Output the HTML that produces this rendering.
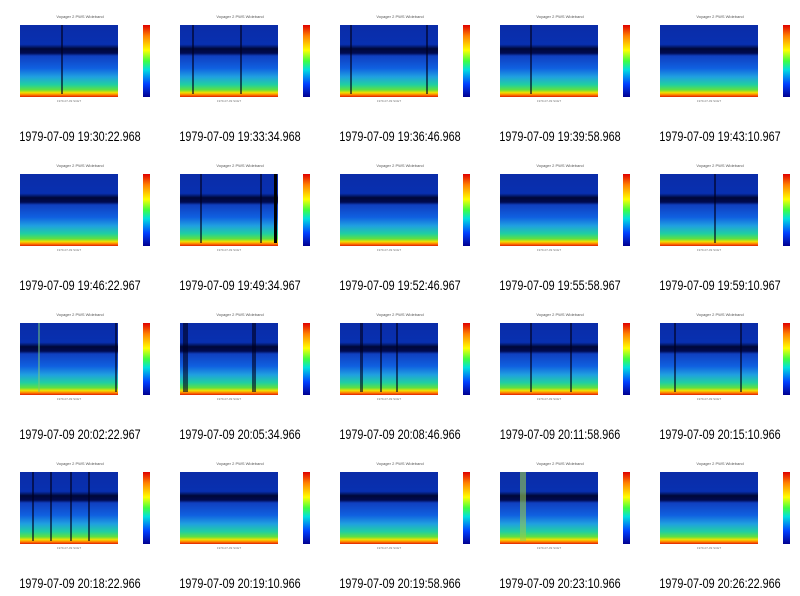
<!DOCTYPE html>
<html><head><meta charset="utf-8"><style>
*{margin:0;padding:0}
body{width:800px;height:596px;background:#fff;position:relative;overflow:hidden;font-family:"Liberation Sans",sans-serif}
.c{position:absolute;width:160px;height:149px}
.t{position:absolute;left:0;top:14px;width:160px;text-align:center;font-size:4px;color:#555}
.p{position:absolute;left:20px;top:25px;width:98px;height:72px;background:
linear-gradient(to top,#e02000 0,#ff8000 3%,#f0e000 6%,#60e040 10%,#20d0a0 17%,#20a0e0 28%,#1060e0 40%,#1040c0 57%,#000a50 61%,#000838 67%,#0830b0 73%,#0a2ca8 100%)}
.p i{position:absolute;top:0;bottom:3px;width:2px;background:rgba(0,0,30,.6)}
.cb{position:absolute;left:143px;top:25px;width:7px;height:72px;background:linear-gradient(#e00000,#ff8000 15%,#ffff00 35%,#40ff40 50%,#00e0e0 62%,#0040ff 82%,#000090)}
.ax{position:absolute;left:20px;top:99px;width:98px;font-size:3px;color:#777;text-align:center}
.cap{position:absolute;left:-20px;top:129px;width:200px;text-align:center;font-size:13.5px;color:#000;transform:scaleX(.8)}
</style></head><body>
<div class="c" style="left:0;top:0"><div class="t">Voyager 2 PWS Wideband</div><div class="p"><i style="left:41px"></i></div><div class="cb"></div><div class="ax">1979-07-09 SCET</div><div class="cap">1979-07-09 19:30:22.968</div></div>
<div class="c" style="left:160px;top:0"><div class="t">Voyager 2 PWS Wideband</div><div class="p"><i style="left:12px"></i><i style="left:60px"></i></div><div class="cb"></div><div class="ax">1979-07-09 SCET</div><div class="cap">1979-07-09 19:33:34.968</div></div>
<div class="c" style="left:320px;top:0"><div class="t">Voyager 2 PWS Wideband</div><div class="p"><i style="left:10px"></i><i style="left:86px"></i></div><div class="cb"></div><div class="ax">1979-07-09 SCET</div><div class="cap">1979-07-09 19:36:46.968</div></div>
<div class="c" style="left:480px;top:0"><div class="t">Voyager 2 PWS Wideband</div><div class="p"><i style="left:30px"></i></div><div class="cb"></div><div class="ax">1979-07-09 SCET</div><div class="cap">1979-07-09 19:39:58.968</div></div>
<div class="c" style="left:640px;top:0"><div class="t">Voyager 2 PWS Wideband</div><div class="p"></div><div class="cb"></div><div class="ax">1979-07-09 SCET</div><div class="cap">1979-07-09 19:43:10.967</div></div>

<div class="c" style="left:0;top:149px"><div class="t">Voyager 2 PWS Wideband</div><div class="p"></div><div class="cb"></div><div class="ax">1979-07-09 SCET</div><div class="cap">1979-07-09 19:46:22.967</div></div>
<div class="c" style="left:160px;top:149px"><div class="t">Voyager 2 PWS Wideband</div><div class="p"><i style="left:20px"></i><i style="left:80px"></i><i style="left:94px;width:3px;background:#000"></i></div><div class="cb"></div><div class="ax">1979-07-09 SCET</div><div class="cap">1979-07-09 19:49:34.967</div></div>
<div class="c" style="left:320px;top:149px"><div class="t">Voyager 2 PWS Wideband</div><div class="p"></div><div class="cb"></div><div class="ax">1979-07-09 SCET</div><div class="cap">1979-07-09 19:52:46.967</div></div>
<div class="c" style="left:480px;top:149px"><div class="t">Voyager 2 PWS Wideband</div><div class="p"></div><div class="cb"></div><div class="ax">1979-07-09 SCET</div><div class="cap">1979-07-09 19:55:58.967</div></div>
<div class="c" style="left:640px;top:149px"><div class="t">Voyager 2 PWS Wideband</div><div class="p"><i style="left:54px"></i></div><div class="cb"></div><div class="ax">1979-07-09 SCET</div><div class="cap">1979-07-09 19:59:10.967</div></div>

<div class="c" style="left:0;top:298px"><div class="t">Voyager 2 PWS Wideband</div><div class="p"><i style="left:18px;background:rgba(120,200,120,.5)"></i><i style="left:95px"></i></div><div class="cb"></div><div class="ax">1979-07-09 SCET</div><div class="cap">1979-07-09 20:02:22.967</div></div>
<div class="c" style="left:160px;top:298px"><div class="t">Voyager 2 PWS Wideband</div><div class="p"><i style="left:3px;width:5px"></i><i style="left:72px;width:4px"></i></div><div class="cb"></div><div class="ax">1979-07-09 SCET</div><div class="cap">1979-07-09 20:05:34.966</div></div>
<div class="c" style="left:320px;top:298px"><div class="t">Voyager 2 PWS Wideband</div><div class="p"><i style="left:20px;width:3px"></i><i style="left:40px"></i><i style="left:56px"></i></div><div class="cb"></div><div class="ax">1979-07-09 SCET</div><div class="cap">1979-07-09 20:08:46.966</div></div>
<div class="c" style="left:480px;top:298px"><div class="t">Voyager 2 PWS Wideband</div><div class="p"><i style="left:30px"></i><i style="left:70px"></i></div><div class="cb"></div><div class="ax">1979-07-09 SCET</div><div class="cap">1979-07-09 20:11:58.966</div></div>
<div class="c" style="left:640px;top:298px"><div class="t">Voyager 2 PWS Wideband</div><div class="p"><i style="left:14px"></i><i style="left:80px"></i></div><div class="cb"></div><div class="ax">1979-07-09 SCET</div><div class="cap">1979-07-09 20:15:10.966</div></div>

<div class="c" style="left:0;top:447px"><div class="t">Voyager 2 PWS Wideband</div><div class="p"><i style="left:12px"></i><i style="left:30px"></i><i style="left:50px"></i><i style="left:68px"></i></div><div class="cb"></div><div class="ax">1979-07-09 SCET</div><div class="cap">1979-07-09 20:18:22.966</div></div>
<div class="c" style="left:160px;top:447px"><div class="t">Voyager 2 PWS Wideband</div><div class="p"></div><div class="cb"></div><div class="ax">1979-07-09 SCET</div><div class="cap">1979-07-09 20:19:10.966</div></div>
<div class="c" style="left:320px;top:447px"><div class="t">Voyager 2 PWS Wideband</div><div class="p"></div><div class="cb"></div><div class="ax">1979-07-09 SCET</div><div class="cap">1979-07-09 20:19:58.966</div></div>
<div class="c" style="left:480px;top:447px"><div class="t">Voyager 2 PWS Wideband</div><div class="p"><i style="left:20px;width:6px;background:rgba(150,200,80,.6)"></i></div><div class="cb"></div><div class="ax">1979-07-09 SCET</div><div class="cap">1979-07-09 20:23:10.966</div></div>
<div class="c" style="left:640px;top:447px"><div class="t">Voyager 2 PWS Wideband</div><div class="p"></div><div class="cb"></div><div class="ax">1979-07-09 SCET</div><div class="cap">1979-07-09 20:26:22.966</div></div>
</body></html>
